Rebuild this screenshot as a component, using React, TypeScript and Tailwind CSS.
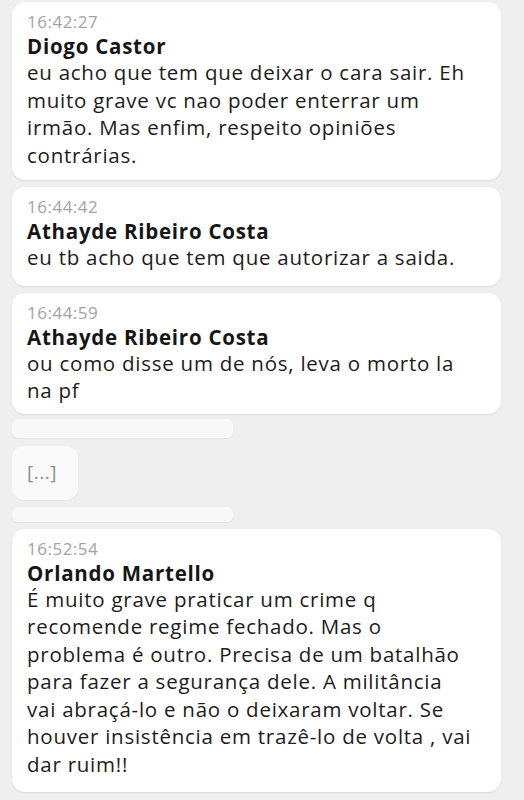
const messages = [
  {
    time: '16:42:27',
    author: 'Diogo Castor',
    lines: [
      'eu acho que tem que deixar o cara sair. Eh',
      'muito grave vc nao poder enterrar um',
      'irmão. Mas enfim, respeito opiniões',
      'contrárias.',
    ],
  },
  {
    time: '16:44:42',
    author: 'Athayde Ribeiro Costa',
    lines: ['eu tb acho que tem que autorizar a saida.'],
  },
  {
    time: '16:44:59',
    author: 'Athayde Ribeiro Costa',
    lines: ['ou como disse um de nós, leva o morto la', 'na pf'],
  },
];

const lastMessage = {
  time: '16:52:54',
  author: 'Orlando Martello',
  lines: [
    'É muito grave praticar um crime q',
    'recomende regime fechado. Mas o',
    'problema é outro. Precisa de um batalhão',
    'para fazer a segurança dele. A militância',
    'vai abraçá-lo e não o deixaram voltar. Se',
    'houver insistência em trazê-lo de volta , vai',
    'dar ruim!!',
  ],
};

type Msg = { time: string; author: string; lines: string[] };

function Bubble({ msg, extra = '' }: { msg: Msg; extra?: string }) {
  return (
    <div className={`w-[489px] rounded-[13px] bg-white pl-[15px] pr-[10px] pt-[8px] shadow-[0_1px_2px_rgba(0,0,0,0.09)] ${extra}`}>
      <p className="text-[17px] leading-[23px] tracking-[0.5px] text-[#a3a3a3]">{msg.time}</p>
      <p className="text-[20.5px] leading-[26px] tracking-[0.75px] font-bold text-[#161616]">{msg.author}</p>
      <div className="text-[20.5px] leading-[27.5px] tracking-[0.75px] text-[#1c1c1c]">
        {msg.lines.map((line, i) => (
          <span key={i} className="block whitespace-nowrap">
            {line}
          </span>
        ))}
      </div>
    </div>
  );
}

export default function App() {
  return (
    <div
      className="min-h-[800px] w-[524px] bg-[#efefef] pl-[12px] pt-[2px]"
      style={{ fontFamily: '"Open Sans", "Noto Sans", sans-serif' }}
    >
      <div className="flex flex-col gap-[7px]">
        <Bubble msg={messages[0]} extra="pb-[11px]" />
        <Bubble msg={messages[1]} extra="pb-[14px]" />
        <Bubble msg={messages[2]} extra="pb-[9px]" />
      </div>

      {/* mensagens ocultas */}
      <div className="mt-[5px] flex flex-col items-start">
        <div className="h-[19px] w-[221px] rounded-[6px] bg-[#f8f8f8] shadow-[0_1px_1px_rgba(0,0,0,0.05)]" />
        <div className="mt-[8px] flex h-[54px] w-[66px] items-center rounded-[12px] bg-[#f9f9f9] pl-[15px] text-[19px] tracking-[0.5px] text-[#8c8c8c] shadow-[0_1px_1px_rgba(0,0,0,0.04)]">
          [...]
        </div>
        <div className="mt-[7px] h-[15px] w-[221px] rounded-[6px] bg-[#f8f8f8] shadow-[0_1px_1px_rgba(0,0,0,0.05)]" />
      </div>

      <div className="mt-[7px]">
        <Bubble msg={lastMessage} extra="pb-[14px]" />
      </div>
    </div>
  );
}
